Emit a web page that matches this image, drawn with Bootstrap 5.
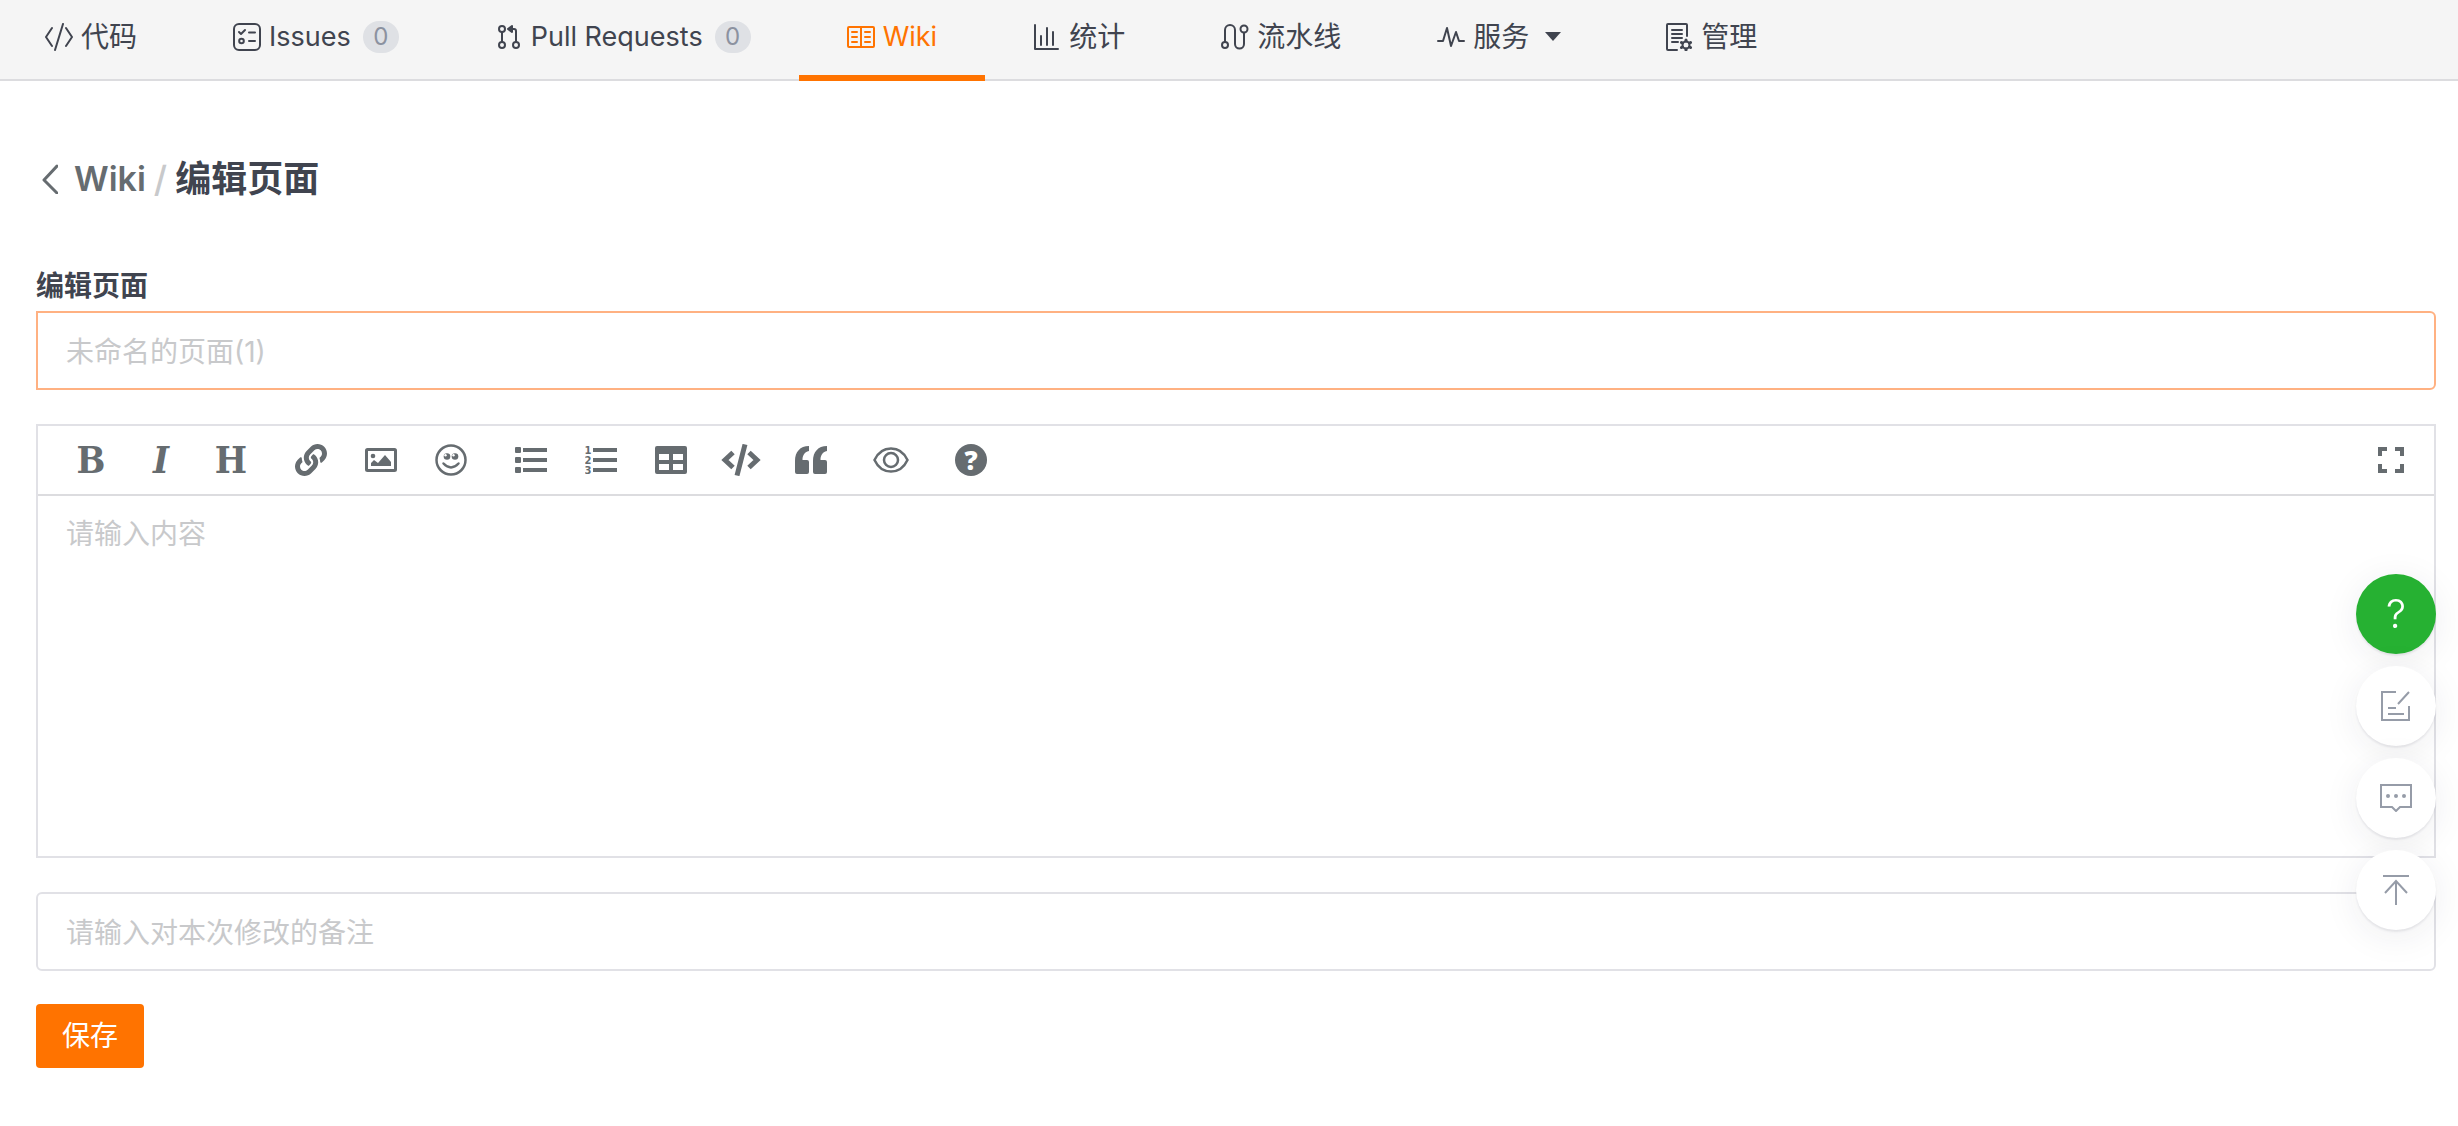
<!DOCTYPE html>
<html lang="zh-CN">
<head>
<meta charset="utf-8">
<meta name="viewport" content="width=device-width, initial-scale=1">
<title>编辑页面 - Wiki</title>
<link href="https://cdn.jsdelivr.net/npm/bootstrap@5.3.0/dist/css/bootstrap.min.css" rel="stylesheet">
<style>
  :root { --ink: #40444f; --tool: #666c70; --line: #e1e1e6; --brand: #ff7300; }
  body { font-family: Inter, "Noto Sans CJK SC", sans-serif; font-size: 28px; line-height: 42px; color: var(--ink); background: #fff; }
  svg { display: block; flex: none; }
  .line-icon { fill: none; stroke: currentColor; stroke-width: 2; stroke-linecap: round; stroke-linejoin: round; }
  .repo-nav { background: #f5f5f5; border-bottom: 2px solid #dcdcdf; height: 81px; }
  .repo-nav .nav-link { color: var(--ink); height: 81px; padding: 0 48px 2px; gap: 8px; border-bottom: 6px solid transparent; white-space: nowrap; }
  .repo-nav .nav-item:first-child .nav-link { padding-left: 45px; }
  .repo-nav .nav-link.active { color: var(--brand); border-bottom-color: var(--brand); }
  .repo-nav .latin { font-size: 27px; }
  .count { background: #dfe1e5; color: #8c92a0; font-size: 24px; line-height: 32px; width: 36px; border-radius: 16px; text-align: center; margin-left: 4px; }
  .caret { border: 8px solid transparent; border-top: 9px solid currentColor; border-bottom: 0; margin: 0 8px; }
  .page { padding: 74px 22px 58px 36px; }
  .crumbs { font-size: 36px; line-height: 48px; font-weight: 700; margin: 0 0 60px 6px; }
  .crumbs a { color: var(--tool); gap: 16px; font-size: 34px; font-weight: 600; }
  .crumbs .slash { color: #c8c9cb; font-weight: 500; }
  .field-title { font-weight: 700; padding-top: 2px; margin-bottom: 4px; display: block; }
  .field, .field:focus { height: 79px; padding: 2px 28px 0; border: 2px solid var(--line); border-radius: 6px; font-size: 28px; line-height: 42px; box-shadow: none; }
  .field.current { border-color: #ffb182; border-radius: 0 6px 6px 0; }
  .form-control::placeholder { color: #c8c9cb; opacity: 1; }
  .editor { border: 2px solid var(--line); margin: 34px 0; }
  .tools { height: 70px; border-bottom: 2px solid #dcdcdf; padding: 0 8px 0 18px; gap: 10px; }
  .tools .btn { width: 70px; height: 68px; padding: 0; border: 0; border-radius: 0; color: var(--tool); display: flex; align-items: center; justify-content: center; }
  .tools .letter { font: 700 38px/68px "DejaVu Serif Condensed", "DejaVu Serif", serif; }
  .help { width: 32px; height: 32px; border-radius: 50%; background: var(--tool); color: #fff; font: 800 26px/32px "Open Sans", sans-serif; }
  .editor textarea, .editor textarea:focus { height: 360px; padding: 17px 28px; border: 0; border-radius: 0; font-size: 28px; line-height: 42px; resize: none; box-shadow: none; }
  .save { width: 108px; height: 64px; margin-top: 33px; padding: 0; border: 0; border-radius: 4px; background: var(--brand); color: #fff; font-size: 28px; line-height: 42px; }
  .save:hover { background: var(--brand); color: #fff; }
  .side { position: fixed; right: 22px; bottom: 196px; gap: 12px; }
  .side .btn { width: 80px; height: 80px; padding: 0; border: 0; background: #fff; color: #969ca8; display: flex; align-items: center; justify-content: center; box-shadow: 0 2px 2px rgba(50,50,80,.09), 0 6px 36px rgba(40,40,60,.08); }
  .side .ask { background: #26b132; color: #fff; font-size: 40px; font-weight: 300; line-height: 80px; }
</style>
</head>
<body>
<nav class="repo-nav">
  <ul class="nav flex-nowrap">
    <li class="nav-item"><a class="nav-link d-flex align-items-center" href="#"><svg class="line-icon" width="28" height="28" viewBox="0 0 28 28"><path d="M7 5 1 14l6 9M21 5l6 9-6 9M18 1l-8 26"/></svg>代码</a></li>
    <li class="nav-item"><a class="nav-link latin d-flex align-items-center" href="#"><svg class="line-icon" width="28" height="28" viewBox="0 0 28 28"><rect x="1" y="1" width="26" height="26" rx="5"/><path d="m6 9 2 2 4-4M16 9.500h6M16 18h6"/><circle cx="8.500" cy="18" r="2.300"/></svg>Issues<span class="count">0</span></a></li>
    <li class="nav-item"><a class="nav-link latin d-flex align-items-center" href="#"><svg class="line-icon" width="28" height="28" viewBox="0 0 28 28"><circle cx="7" cy="6" r="3"/><circle cx="7" cy="22" r="3"/><circle cx="21" cy="22" r="3"/><path d="M7 9v10M21 19V8q0-2-2-2h-5M17 3l-4 3 4 3z"/></svg>Pull Requests<span class="count">0</span></a></li>
    <li class="nav-item"><a class="nav-link latin active d-flex align-items-center" aria-current="page" href="#"><svg class="line-icon" width="28" height="28" viewBox="0 0 28 28"><rect x="1" y="4" width="26" height="20" rx="1"/><path d="M14 4v20M5 9h5M5 14h5M5 19h5M18 9h5M18 14h5M18 19h5"/></svg>Wiki</a></li>
    <li class="nav-item"><a class="nav-link d-flex align-items-center" href="#"><svg class="line-icon" width="28" height="28" viewBox="0 0 28 28"><path d="M2 2v24h23M8 13v9M14 5v17M20 9v13"/></svg>统计</a></li>
    <li class="nav-item"><a class="nav-link d-flex align-items-center" href="#"><svg class="line-icon" width="28" height="28" viewBox="0 0 28 28"><circle cx="4" cy="22" r="3"/><circle cx="23" cy="6" r="3.500"/><path d="M4 19V7a5 5 0 0 1 10 0v14a4.500 4.500 0 0 0 9 0V10"/></svg>流水线</a></li>
    <li class="nav-item"><a class="nav-link d-flex align-items-center" href="#"><svg class="line-icon" width="28" height="28" viewBox="0 0 28 28"><path d="M1 18h5l4-13 4 18 5-14 3 9h5"/></svg>服务<span class="caret"></span></a></li>
    <li class="nav-item"><a class="nav-link d-flex align-items-center" href="#"><svg class="line-icon" width="28" height="28" viewBox="0 0 28 28"><path d="M22 13V2q0-1-1-1H3Q2 1 2 2v24q0 1 1 1h9M7 7h10M7 11h10M7 15h10M7 19h6"/><circle cx="21" cy="22" r="3.500"/><path d="M21 17v1M21 26v1M16.500 19.500l1 .5M24.500 24l1 .5M16.500 24.500l1-.5M24.500 20l1-.5" stroke-width="3"/></svg>管理</a></li>
  </ul>
</nav>

<main class="page">
  <h1 class="crumbs d-flex align-items-center gap-2">
    <a class="d-flex align-items-center text-decoration-none" href="#"><svg class="line-icon" width="16" height="30" viewBox="0 0 16 30"><path d="M15 2 2 16l13 13" stroke-width="3"/></svg>Wiki</a>
    <span class="slash">/</span>
    <span>编辑页面</span>
  </h1>

  <form>
    <label class="field-title" for="title">编辑页面</label>
    <input class="form-control field current" id="title" type="text" placeholder="未命名的页面(1)">

    <div class="editor">
      <div class="tools d-flex align-items-center">
        <div class="d-flex">
          <button class="btn letter" type="button" aria-label="粗体">B</button>
          <button class="btn letter fst-italic" type="button" aria-label="斜体">I</button>
          <button class="btn letter" type="button" aria-label="标题">H</button>
        </div>
        <div class="d-flex">
          <button class="btn" type="button" aria-label="链接"><svg width="32" height="32" viewBox="0 0 512 512" fill="currentColor"><path d="M326.612 185.391c59.747 59.809 58.927 155.698.36 214.590-.11.12-.24.25-.36.37l-67.200 67.200c-59.270 59.270-155.699 59.262-214.960 0-59.270-59.260-59.270-155.700 0-214.960l37.106-37.106c9.840-9.840 26.786-3.300 27.294 10.606.648 17.722 3.826 35.527 9.690 52.721 1.986 5.822.567 12.262-3.783 16.612l-13.087 13.087c-28.026 28.026-28.905 73.660-1.155 101.960 28.024 28.579 74.086 28.749 102.325.51l67.200-67.190c28.191-28.191 28.073-73.757 0-101.830-3.701-3.694-7.429-6.564-10.341-8.569a16.037 16.037 0 0 1-6.947-12.606c-.396-10.567 3.348-21.456 11.698-29.806l21.054-21.055c5.521-5.521 14.182-6.199 20.584-1.731a152.482 152.482 0 0 1 20.522 17.197zM467.547 44.449c-59.261-59.262-155.690-59.270-214.960 0l-67.200 67.200c-.12.12-.25.25-.36.37-58.566 58.892-59.387 154.781.36 214.590a152.454 152.454 0 0 0 20.521 17.196c6.402 4.468 15.064 3.789 20.584-1.731l21.054-21.055c8.350-8.350 12.094-19.239 11.698-29.806a16.037 16.037 0 0 0-6.947-12.606c-2.912-2.005-6.640-4.875-10.341-8.569-28.073-28.073-28.191-73.639 0-101.830l67.200-67.190c28.239-28.239 74.300-28.069 102.325.51 27.750 28.300 26.872 73.934-1.155 101.960l-13.087 13.087c-4.350 4.350-5.769 10.790-3.783 16.612 5.864 17.194 9.042 34.999 9.690 52.721.509 13.906 17.454 20.446 27.294 10.606l37.106-37.106c59.271-59.259 59.271-155.699.001-214.959z"/></svg></button>
          <button class="btn" type="button" aria-label="图片"><svg width="32" height="32" viewBox="0 0 32 32" fill="currentColor"><rect x="1.500" y="5.500" width="29" height="21" rx="1" fill="none" stroke="currentColor" stroke-width="3"/><circle cx="8" cy="12" r="2.300"/><path d="M6 22v-3l3-3 4 3 7-8 6 7v4z"/></svg></button>
          <button class="btn" type="button" aria-label="表情"><svg width="32" height="32" viewBox="0 0 32 32" fill="currentColor"><circle cx="16" cy="16" r="14.500" fill="none" stroke="currentColor" stroke-width="2.500"/><circle cx="12" cy="12.500" r="3.300"/><circle cx="20" cy="12.500" r="3.300"/><circle cx="10.500" cy="11.300" r="1.200" fill="#fff"/><circle cx="18.500" cy="11.300" r="1.200" fill="#fff"/><path d="M8.500 19.500q7.500 8 15 0" fill="none" stroke="currentColor" stroke-width="2.500" stroke-linecap="round"/></svg></button>
        </div>
        <div class="d-flex">
          <button class="btn" type="button" aria-label="无序列表"><svg width="32" height="32" viewBox="0 0 32 32" fill="currentColor"><rect y="3" width="6" height="6" rx="1"/><rect y="13" width="6" height="6" rx="1"/><rect y="23" width="6" height="6" rx="1"/><path d="M8 4h24v4H8zM8 14h24v4H8zM8 24h24v4H8z"/></svg></button>
          <button class="btn" type="button" aria-label="有序列表"><svg width="32" height="32" viewBox="0 0 32 32" fill="currentColor"><path d="M8 4h24v4H8zM8 14h24v4H8zM8 24h24v4H8z"/><g font-family="DejaVu Sans" font-size="10" font-weight="700" text-anchor="middle"><text x="3" y="10">1</text><text x="3" y="20">2</text><text x="3" y="30">3</text></g></svg></button>
          <button class="btn" type="button" aria-label="表格"><svg width="32" height="32" viewBox="0 0 32 32" fill="currentColor"><path fill-rule="evenodd" d="M2 2h28a2 2 0 0 1 2 2v24a2 2 0 0 1-2 2H2a2 2 0 0 1-2-2V4a2 2 0 0 1 2-2zm2 8v6h10v-6zm14 0v6h10v-6zM4 20v6h10v-6zm14 0v6h10v-6z"/></svg></button>
          <button class="btn" type="button" aria-label="代码"><svg width="40" height="32" viewBox="0 0 40 32" fill="none" stroke="currentColor" stroke-width="5"><path d="M12 8.500 4 16l8 7.500M28 8.500l8 7.500-8 7.500M24 .5l-8 31"/></svg></button>
          <button class="btn" type="button" aria-label="引用"><svg width="32" height="28" viewBox="0 0 32 28" fill="currentColor"><path d="M0 26V15C0 6 5 0 14 0v5c-5 1-6.500 5-6.500 9H12a2 2 0 0 1 2 2v10a2 2 0 0 1-2 2H2a2 2 0 0 1-2-2z"/><path d="M18 26V15c0-9 5-15 14-15v5c-5 1-6.500 5-6.500 9H30a2 2 0 0 1 2 2v10a2 2 0 0 1-2 2H20a2 2 0 0 1-2-2z"/></svg></button>
        </div>
        <button class="btn" type="button" aria-label="预览"><svg width="36" height="26" viewBox="0 0 36 26" fill="none" stroke="currentColor" stroke-width="2.500"><path d="M1.500 13C5 5.500 11 1.500 18 1.500S31 5.500 34.500 13C31 20.500 25 24.500 18 24.500S5 20.500 1.500 13z"/><circle cx="18" cy="13" r="7"/></svg></button>
        <button class="btn" type="button" aria-label="帮助"><span class="help">?</span></button>
        <button class="btn ms-auto" type="button" aria-label="全屏"><svg width="26" height="26" viewBox="0 0 26 26" fill="none" stroke="currentColor" stroke-width="4"><path d="M2 9V2h7M17 2h7v7M24 17v7h-7M9 24H2v-7"/></svg></button>
      </div>
      <textarea class="form-control" aria-label="内容" placeholder="请输入内容"></textarea>
    </div>

    <input class="form-control field" type="text" aria-label="备注" placeholder="请输入对本次修改的备注">
    <button class="btn save d-block" type="submit">保存</button>
  </form>
</main>

<aside class="side d-flex flex-column">
  <button class="btn rounded-circle ask" type="button">?</button>
  <button class="btn rounded-circle" type="button" aria-label="编辑"><svg width="30" height="30" viewBox="0 0 30 30" fill="none" stroke="currentColor" stroke-width="2"><path d="M15 1H1v28h27V15M28 1 17 13M7 17h8M7 23h16"/></svg></button>
  <button class="btn rounded-circle" type="button" aria-label="评论"><svg width="32" height="28" viewBox="0 0 32 28" fill="none" stroke="currentColor" stroke-width="2"><path d="M1 1h30v22H20l-4 4-4-4H1z"/><g fill="currentColor" stroke="none"><circle cx="8" cy="12" r="2"/><circle cx="16" cy="12" r="2"/><circle cx="24" cy="12" r="2"/></g></svg></button>
  <button class="btn rounded-circle" type="button" aria-label="返回顶部"><svg width="26" height="30" viewBox="0 0 26 30" fill="none" stroke="currentColor" stroke-width="2"><path d="M0 1h26M13 30V6M2 18 13 6l11 12"/></svg></button>
</aside>
<script src="https://cdn.jsdelivr.net/npm/bootstrap@5.3.0/dist/js/bootstrap.bundle.min.js"></script>
</body>
</html>
